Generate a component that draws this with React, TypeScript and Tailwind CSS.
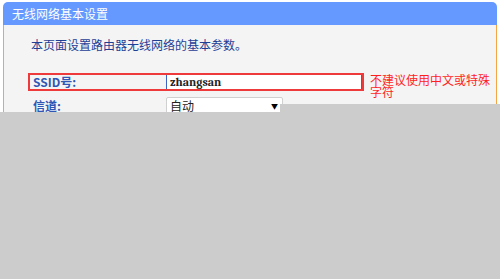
import React from "react";

const cjk = "font-['Noto_Sans_CJK_SC','Noto_Sans',sans-serif]";

export default function App() {
  return (
    <div className={`relative h-[279px] w-[500px] overflow-hidden bg-white ${cjk}`}>
      {/* panel */}
      <div className="mx-[3px] mt-[2px]">
        <div className="flex h-[23px] items-center rounded-t-[5px] bg-[#6699ff] pl-[9px] text-[12px] text-white">
          无线网络基本设置
        </div>
        <div className="h-[260px] border-x border-[#f5a545] bg-[#f4f4f4] pl-[24px] pt-[12px]">
          <p className="ml-[3px] text-[12px] leading-[16px] text-[#1f3f95]">本页面设置路由器无线网络的基本参数。</p>

          {/* SSID row */}
          <div className="mt-[20px] flex items-start">
            <div className="flex h-[18px] w-[336px] items-stretch border-2 border-[#ee3a3a]">
              <div className="flex w-[136px] items-center pl-[3px] text-[12px] font-bold text-[#2f55b5]">
                SSID号:
              </div>
              <div className="flex flex-1 items-center border-x border-[#3d63c8] bg-white pl-[3px] font-serif text-[12px] font-bold text-[#222]">
                zhangsan
              </div>
            </div>
            <div className="ml-[6px] mt-[1px] w-[124px] text-[12px] leading-[12px] text-[#ff1f1f]">
              不建议使用中文或特殊字符
            </div>
          </div>

          {/* channel row */}
          <div className="-mt-[1px] flex items-start">
            <div className="flex w-[138px] pl-[5px] text-[12px] font-bold text-[#2f55b5]">信道:</div>
            <div className="flex h-[18px] w-[117px] items-center justify-between rounded-[2px] border border-[#d0d0d0] bg-white pl-[3px] pr-[4px] text-[12px] text-[#222]">
              <span>自动</span>
              <span className="text-[7px] text-black">▼</span>
            </div>
          </div>
        </div>
      </div>

      {/* grey overlay covering the lower part */}
      <div className="absolute left-[280px] right-0 top-[104px] h-[8px] bg-[#cccccc]" />
      <div className="absolute bottom-0 left-0 right-0 top-[112px] bg-[#cccccc]" />
    </div>
  );
}
